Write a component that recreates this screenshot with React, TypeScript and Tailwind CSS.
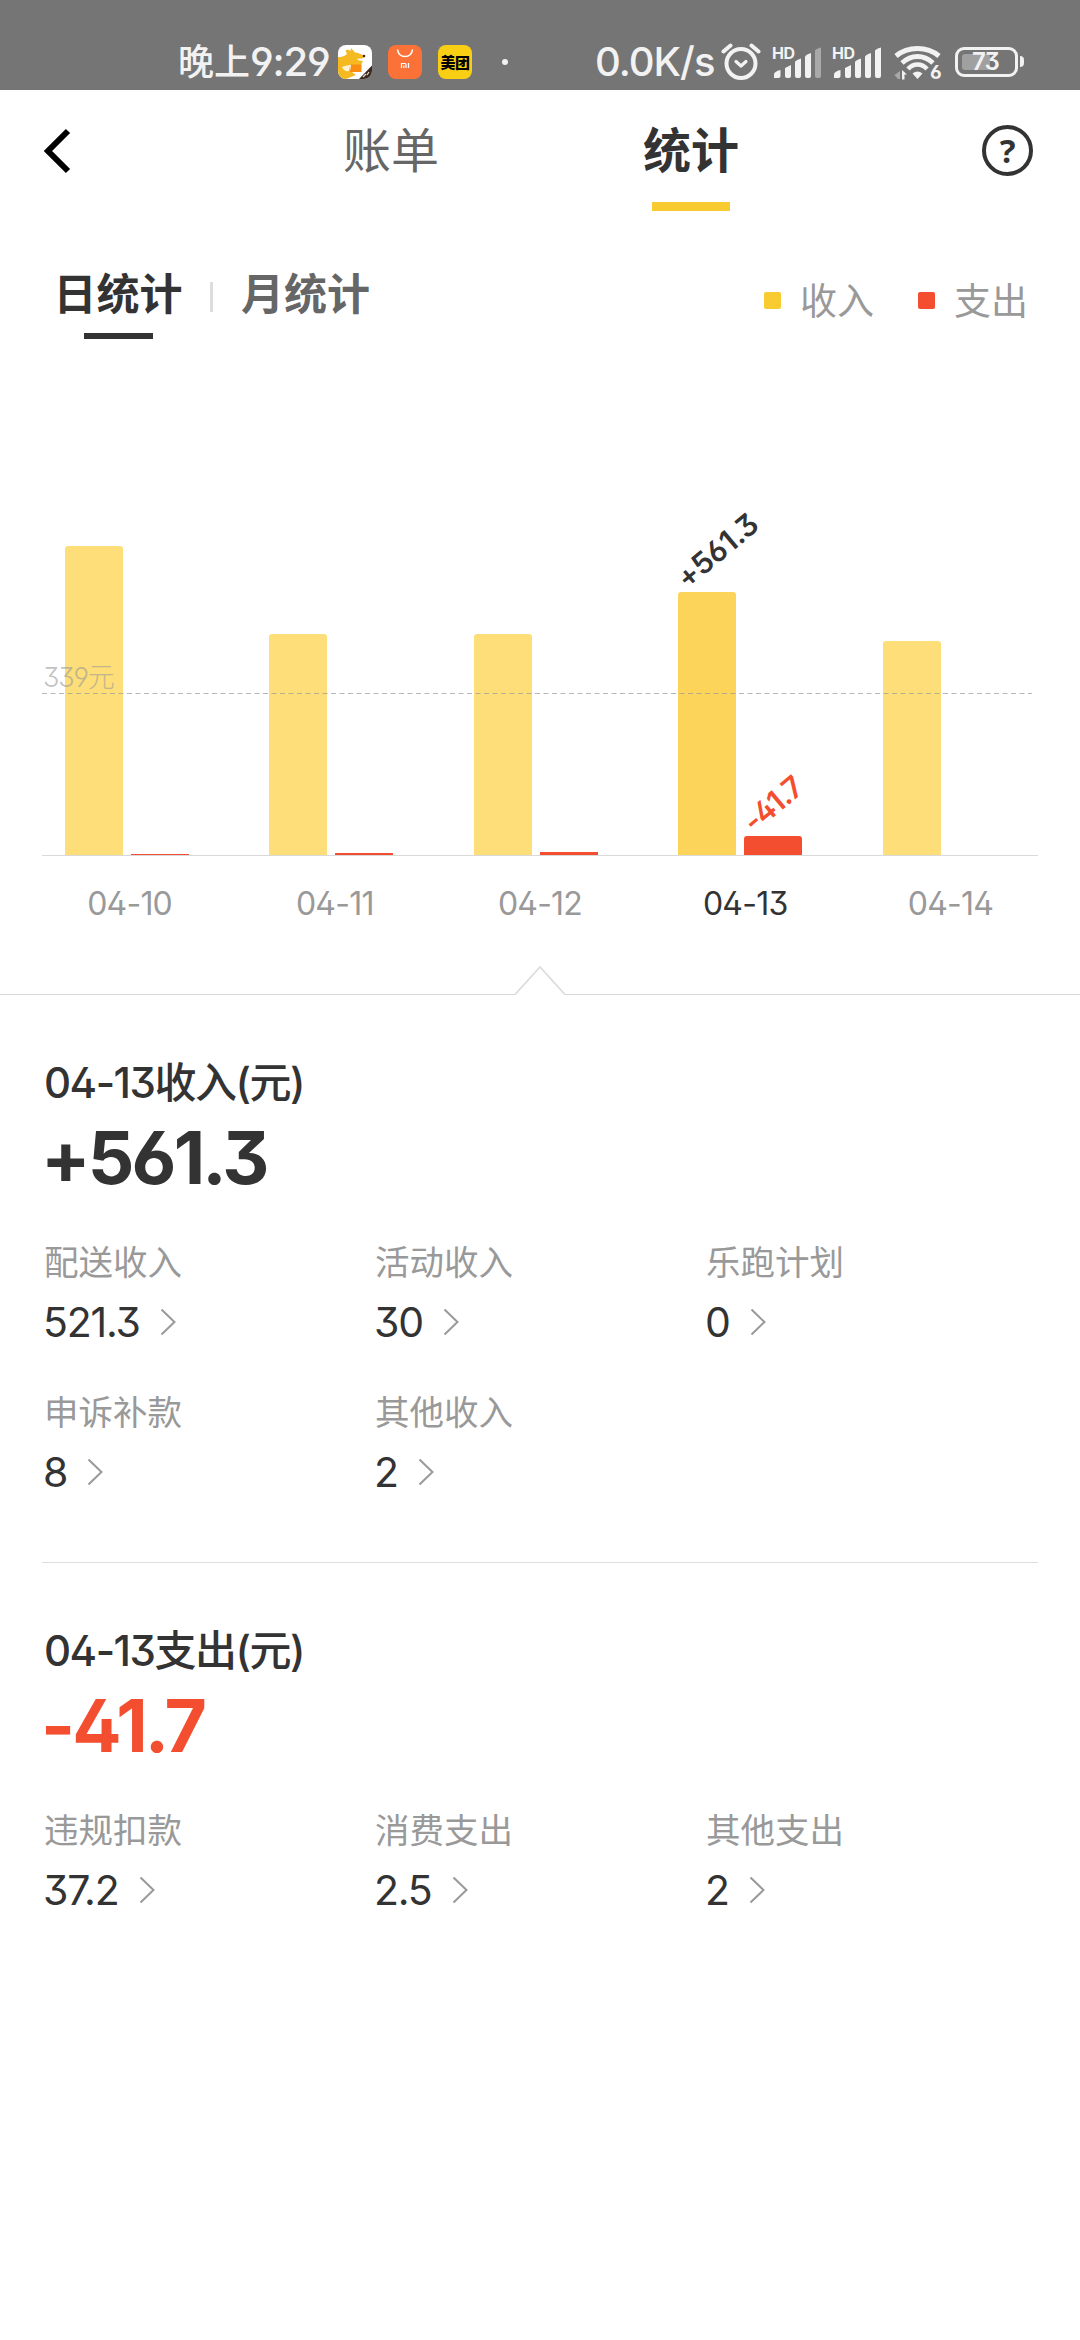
interface DayStat {
  date: string;
  income: number; // bar height, px
  expense: number;
  incomeLabel?: string;
  expenseLabel?: string;
}

interface StatItem {
  label: string;
  value: string;
}

const days: DayStat[] = [
  { date: "04-10", income: 309, expense: 1 },
  { date: "04-11", income: 221, expense: 2 },
  { date: "04-12", income: 221, expense: 3 },
  { date: "04-13", income: 263, expense: 19, incomeLabel: "+561.3", expenseLabel: "-41.7" },
  { date: "04-14", income: 214, expense: 0 },
];

const incomeItems: StatItem[] = [
  { label: "配送收入", value: "521.3" },
  { label: "活动收入", value: "30" },
  { label: "乐跑计划", value: "0" },
  { label: "申诉补款", value: "8" },
  { label: "其他收入", value: "2" },
];

const expenseItems: StatItem[] = [
  { label: "违规扣款", value: "37.2" },
  { label: "消费支出", value: "2.5" },
  { label: "其他支出", value: "2" },
];

function KangarooIcon() {
  return (
    <svg width="34" height="34" viewBox="0 0 34 34">
      <clipPath id="kangaroo">
        <rect width="34" height="34" rx="8" />
      </clipPath>
      <g clipPath="url(#kangaroo)">
        <rect width="34" height="34" fill="#fff" />
        <path d="M0 12 Q5 13 9 9 L7.500 5.500 Q10 4 12.500 6 L13 3 L17 7.500 Q23 8 27 12 Q24 14.500 19 13.500 Q20 16 25 16 L23 20 L12 20 Q11 25 14 27 L18 30 L8 34 H0 Z" fill="#f5b921" />
        <path d="M4 22 Q9 20 12 20 L11 26 Q6 27 4 22 Z" fill="#fff3d0" />
        <path d="M13 19.500 H23.500 V27 H12 Z" fill="#fb8c12" />
        <circle cx="26" cy="11" r="1.300" fill="#4a2a10" />
        <path d="M21 34 L34 20.500 V34 Z" fill="#3b2a20" />
        <path d="M25 32 L28 29 M29 30 L31 27" stroke="#e8dccb" strokeWidth="1.200" />
      </g>
    </svg>
  );
}

function StoreIcon() {
  return (
    <svg width="34" height="34" viewBox="0 0 34 34">
      <rect width="34" height="34" rx="8" fill="#fb7239" />
      <path d="M9.500 4.500 Q10.500 11.500 17 11.500 Q23.500 11.500 24.500 4.500" fill="none" stroke="#fff" strokeWidth="1.600" />
      <path d="M13.500 23 V18.500 H17 Q18 18.500 18 19.500 V23 M15.800 20.500 V23 M20.500 18 V23" fill="none" stroke="#fff" strokeWidth="1.200" />
    </svg>
  );
}

function AlarmIcon() {
  return (
    <svg width="40" height="38" viewBox="0 0 40 38" fill="none" stroke="#f2f2f2" strokeLinecap="round">
      <circle cx="20" cy="20.500" r="14.500" strokeWidth="4" />
      <path d="M15 18.500 L20 23 L25 18.500" strokeWidth="3.200" strokeLinejoin="round" />
      <path d="M2.500 8.500 L9.500 2.500 M37.500 8.500 L30.500 2.500" strokeWidth="4" />
    </svg>
  );
}

function SignalIcon({ weak }: { weak?: boolean }) {
  return (
    <div className="relative w-[50px] h-[34px]">
      <span className="absolute left-0 top-[-3px] text-[16px] leading-[20px] font-bold tracking-[-0.500px]">HD</span>
      <svg width="50" height="34" viewBox="0 0 50 34" fill="#f2f2f2">
        <path d="M2 32 V28.500 Q2 25.500 8.500 24 V30 Q8.500 32 6.500 32 Z" />
        <path d="M13 22 L19 19 V30 Q19 32 17 32 H15 Q13 32 13 30 Z" />
        <path d="M23 16 Q23 14.500 29 12.500 V30 Q29 32 27 32 H25 Q23 32 23 30 Z" />
        <path d="M33 11 Q33 9 39 7 V30 Q39 32 37 32 H35 Q33 32 33 30 Z" />
        <path d="M43 5 Q43 3 49 1.500 V30 Q49 32 47 32 H45 Q43 32 43 30 Z" fill={weak ? "#a9a9a9" : "#f2f2f2"} />
      </svg>
    </div>
  );
}

function WifiIcon() {
  return (
    <div className="relative w-[48px] h-[36px]">
      <svg width="48" height="36" viewBox="0 0 48 36" fill="none" stroke="#f2f2f2">
        <path d="M2 11 Q11 3.500 23.500 3.500 Q36 3.500 45 11" strokeWidth="5" />
        <path d="M8 18 Q15 11.500 23.500 11.500 Q32 11.500 39 18" strokeWidth="4.800" />
        <path d="M14 24 Q18 19.500 23.500 19.500 Q29 19.500 33 24" strokeWidth="4.500" />
        <path d="M18.500 28.500 Q23.500 24.500 28.500 28.500 L23.500 34 Z" fill="#f2f2f2" stroke="none" />
        <path d="M0.500 30 L6 26 V34 H4 Z" fill="#a9a9a9" stroke="none" />
        <path d="M8 34.500 V25 L13 29.500 H10.500 V34.500 Z" fill="#f2f2f2" stroke="none" />
      </svg>
      <span className="absolute left-[36px] top-[18px] text-[19px] leading-[20px] font-bold">6</span>
    </div>
  );
}

function StatusBar() {
  return (
    <header className="h-[90px] bg-[#757575] text-[#f2f2f2] flex pt-[41px] pl-[178px]">
      <div className="h-[42px] w-[160px] flex items-center whitespace-nowrap font-medium">
        <span className="text-[36px] leading-[42px]">晚上</span>
        <span className="text-[40px] leading-[42px] tracking-[-1.200px]">9:29</span>
      </div>
      <div className="h-[42px] flex items-center gap-4">
        <KangarooIcon />
        <StoreIcon />
        <div className="size-[34px] rounded-lg bg-[#f8cf14] text-black text-[15px] leading-none font-black flex items-center justify-center tracking-[-0.500px]">美团</div>
      </div>
      <div className="mt-[18px] ml-[30px] size-[6px] rounded-full bg-[#f2f2f2]" />
      <div className="ml-[87px] w-[126px] h-[42px] text-[40px] leading-[42px] font-medium tracking-[-1px] whitespace-nowrap">0.0K/s</div>
      <div className="mt-[2px]">
        <AlarmIcon />
      </div>
      <div className="mt-[5px] ml-[11px]">
        <SignalIcon weak />
      </div>
      <div className="mt-[5px] ml-[10px]">
        <SignalIcon />
      </div>
      <div className="mt-[4px] ml-[12px]">
        <WifiIcon />
      </div>
      <div className="mt-[6px] ml-[13px] w-[63px] h-[30px] rounded-[9px] border-[3px] border-[#f2f2f2] p-[4px]">
        <div className="relative w-[28px] h-full rounded-[3px] bg-[#a0a0a0]">
          <span className="absolute left-[10px] top-[-2px] text-[24px] leading-5 font-semibold tracking-[-1px]">73</span>
        </div>
      </div>
      <div className="mt-[15px] ml-[2px] w-[4px] h-[11px] rounded-r bg-[#f2f2f2]" />
    </header>
  );
}

function NavBar() {
  return (
    <nav className="h-[140px] flex pl-[42px]">
      <svg className="mt-[37px] -ml-px" width="30" height="48" viewBox="0 0 30 48" fill="none">
        <path d="M27 4 L7 24 L27 44" stroke="#000" strokeWidth="6" />
      </svg>
      <div className="ml-[272px] w-[96px] pt-[30px] text-[48px] leading-[62px] text-[#666]">账单</div>
      <div className="ml-[204px] w-[96px] flex flex-col items-center">
        <div className="pt-[30px] text-[48px] leading-[62px] font-bold text-[#333]">统计</div>
        <div className="mt-[20px] w-[78px] h-[9px] bg-[#f8cb31]" />
      </div>
      <div className="mt-[35px] ml-[243px] size-[51px] rounded-full border-[4px] border-[#333] text-[#333] text-[33px] font-bold leading-none flex items-center justify-center font-['Noto_Sans']">?</div>
    </nav>
  );
}

function PeriodTabs() {
  return (
    <div className="h-[130px] flex pl-[53px]">
      <div className="flex flex-col items-center w-[130px]">
        <div className="pt-[36px] text-[43px] leading-[56px] font-bold text-[#333]">日统计</div>
        <div className="mt-[11px] w-[69px] h-[6px] bg-[#333]" />
      </div>
      <div className="mt-[52px] ml-[27px] w-[3px] h-[30px] bg-[#ddd]" />
      <div className="ml-[28px] w-[130px] pt-[36px] text-[43px] leading-[56px] font-bold text-[#666]">月统计</div>
      <div className="mt-[62px] ml-[393px] size-[17px] rounded-[2px] bg-[#f8cb31]" />
      <div className="ml-[19px] pt-[48px] w-[76px] text-[37px] leading-[48px] text-[#999]">收入</div>
      <div className="mt-[62px] ml-[42px] size-[17px] rounded-[2px] bg-[#f34e2f]" />
      <div className="ml-[19px] pt-[48px] w-[76px] text-[37px] leading-[48px] text-[#999]">支出</div>
    </div>
  );
}

function Chart() {
  return (
    <section className="relative h-[606px] pt-[180px]">
      <div className="h-[315px] ml-[27px] w-[1022px] flex">
        {days.map((day) => (
          <div key={day.date} className="flex-1 flex items-end gap-[8px] pl-[38px]">
            <div
              className={`relative w-[58px] rounded-t-[3px] ${day.incomeLabel ? "bg-[#fdd45a]" : "bg-[#fdde78]"}`}
              style={{ height: day.income }}
            >
              {day.incomeLabel && (
                <span className="absolute left-[11px] bottom-full origin-bottom-left -rotate-40 text-[30px] leading-[28px] font-semibold tracking-[-0.300px] text-[#333]">
                  {day.incomeLabel}
                </span>
              )}
            </div>
            <div
              className={`relative w-[58px] bg-[#f34e2f] ${day.expense > 3 ? "rounded-t-[3px]" : ""}`}
              style={{ height: day.expense }}
            >
              {day.expenseLabel && (
                <span className="absolute left-[12px] bottom-full origin-bottom-left -rotate-40 text-[30px] leading-[28px] font-semibold tracking-[-1px] text-[#f34e2f]">
                  {day.expenseLabel}
                </span>
              )}
            </div>
          </div>
        ))}
      </div>
      <div className="mx-[42px] h-px bg-[#d9d9d9]" />

      <div className="mx-[27px] mt-[28px] flex">
        {days.map((day) => (
          <div key={day.date} className={`flex-1 text-center text-[32px] leading-[40px] tracking-[-0.800px] ${day.incomeLabel ? "text-[#333]" : "text-[#999]"}`}>
            {day.date}
          </div>
        ))}
      </div>

      {/* Average line */}
      <div className="absolute left-[43px] top-[302px] text-[27px] leading-[32px] tracking-[-1.200px] text-[#999]/60 font-light">339元</div>
      <svg className="absolute left-[42px] top-[333px]" width="990" height="2" viewBox="0 0 990 2">
        <path d="M0 0.500 H990" stroke="#999" strokeOpacity="0.700" strokeWidth="1" strokeDasharray="5 3.500" />
      </svg>
    </section>
  );
}

function Divider() {
  return (
    <div className="flex items-end h-[29px]">
      <div className="flex-1 h-px bg-[#d9d9d9]" />
      <svg width="50" height="29" viewBox="0 0 50 29" fill="none">
        <path d="M0 28.500 L25 1 L50 28.500" stroke="#ddd" strokeWidth="1.800" />
      </svg>
      <div className="w-[515px] h-px bg-[#d9d9d9]" />
    </div>
  );
}

function StatSection({ title, total, items, negative }: { title: string; total: string; items: StatItem[]; negative?: boolean }) {
  return (
    <section className="pt-[63px] pl-[44px]">
      <h2 className="text-[42px] leading-[50px] font-medium tracking-[-1.500px] text-[#333]">{title}</h2>
      <div className={`mt-[10px] -ml-[3px] text-[73px] leading-[80px] font-bold tracking-[-2.800px] ${negative ? "text-[#f34e2f]" : "text-[#333]"}`}>{total}</div>
      <div className="mt-[45px] grid grid-cols-[331px_331px_331px] gap-y-[47px]">
        {items.map((item) => (
          <div key={item.label}>
            <div className="text-[34.500px] leading-[40px] text-[#999]">{item.label}</div>
            <div className="mt-[15px] -ml-px h-[48px] flex items-center gap-[20px] text-[41px] leading-[48px] tracking-[-1.200px] text-[#333]">
              {item.value}
              <svg width="17" height="28" viewBox="0 0 17 28" fill="none">
                <path d="M1.500 1.500 L14.500 14 L1.500 26.500" stroke="#999" strokeWidth="2" />
              </svg>
            </div>
          </div>
        ))}
      </div>
    </section>
  );
}

export default function App() {
  return (
    <div className="w-[1080px] h-[2340px] overflow-hidden bg-white font-[Inter,'Noto_Sans_CJK_SC',sans-serif] [font-feature-settings:'cv09','ss01']">
      <StatusBar />
      <NavBar />
      <PeriodTabs />
      <Chart />
      <Divider />
      <StatSection title="04-13收入(元)" total="+561.3" items={incomeItems} />
      <div className="mt-[66px] mx-[42px] h-px bg-[#ddd]" />
      <StatSection title="04-13支出(元)" total="-41.7" items={expenseItems} negative />
    </div>
  );
}
